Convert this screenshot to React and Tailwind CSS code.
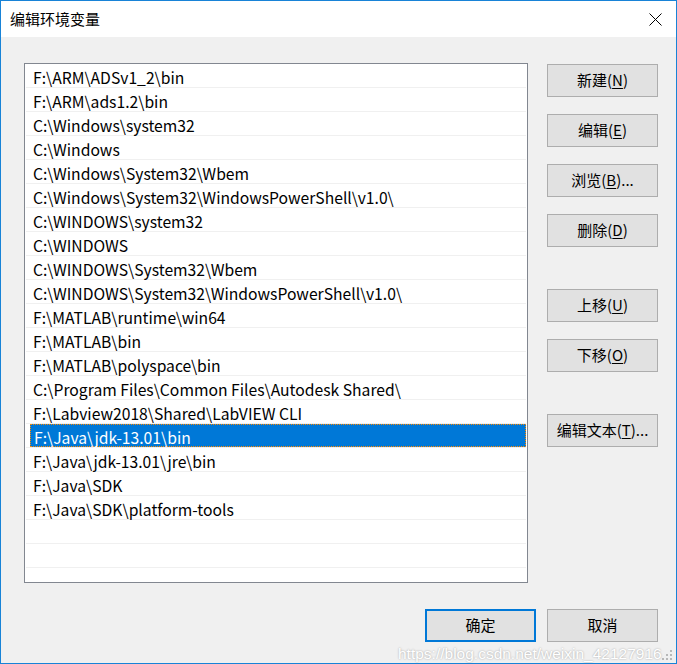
import React from "react";

const paths = [
  "F:\\ARM\\ADSv1_2\\bin",
  "F:\\ARM\\ads1.2\\bin",
  "C:\\Windows\\system32",
  "C:\\Windows",
  "C:\\Windows\\System32\\Wbem",
  "C:\\Windows\\System32\\WindowsPowerShell\\v1.0\\",
  "C:\\WINDOWS\\system32",
  "C:\\WINDOWS",
  "C:\\WINDOWS\\System32\\Wbem",
  "C:\\WINDOWS\\System32\\WindowsPowerShell\\v1.0\\",
  "F:\\MATLAB\\runtime\\win64",
  "F:\\MATLAB\\bin",
  "F:\\MATLAB\\polyspace\\bin",
  "C:\\Program Files\\Common Files\\Autodesk Shared\\",
  "F:\\Labview2018\\Shared\\LabVIEW CLI",
  "F:\\Java\\jdk-13.01\\bin",
  "F:\\Java\\jdk-13.01\\jre\\bin",
  "F:\\Java\\SDK",
  "F:\\Java\\SDK\\platform-tools",
  "",
  "",
  "",
];

const SELECTED = 15;

function Btn({ label, hot, tail = "", primary }) {
  return (
    <button
      className={
        "w-[111px] h-[33px] bg-[#e1e1e1] text-[15px] text-black flex items-center justify-center " +
        (primary ? "border-2 border-[#0078d7]" : "border border-[#adadad]")
      }
    >
      {label}
      {hot && (
        <>
          (<span className="underline underline-offset-2">{hot}</span>){tail}
        </>
      )}
    </button>
  );
}

export default function App() {
  return (
    <div className="relative w-[677px] h-[664px] border border-[#1883d7] bg-[#f0f0f0] flex flex-col overflow-hidden font-['Noto_Sans_CJK_SC',sans-serif]">
      <div className="h-[36px] bg-white flex items-center justify-between pl-[9px] pr-[14px]">
        <span className="text-[15px] text-black">编辑环境变量</span>
        <svg width="13" height="13" viewBox="0 0 13 13">
          <path d="M0.5 0.5 L12.5 12.5 M12.5 0.5 L0.5 12.5" stroke="#000" strokeWidth="1" />
        </svg>
      </div>

      <div className="flex pl-[23px] pt-[26px] gap-[19px]">
        <div className="w-[504px] h-[520px] bg-white border border-[#828790] overflow-hidden">
          {paths.map((p, i) => (
            <div key={i} className="h-[24px] mx-[1px] border-b border-[#f0f0f0] flex">
              <div
                className={
                  "ml-[4px] flex-1 pl-[3px] pt-[4px] flex items-center text-[15.7px] whitespace-nowrap " +
                  (i === SELECTED
                    ? "bg-[#0078d7] text-white border border-dotted border-[#ff8a00]"
                    : "text-black")
                }
              >
                {p}
              </div>
            </div>
          ))}
        </div>

        <div className="flex flex-col pt-[1px]">
          <div className="flex flex-col gap-[17px]">
            <Btn label="新建" hot="N" />
            <Btn label="编辑" hot="E" />
            <Btn label="浏览" hot="B" tail="..." />
            <Btn label="删除" hot="D" />
          </div>
          <div className="flex flex-col gap-[17px] mt-[42px]">
            <Btn label="上移" hot="U" />
            <Btn label="下移" hot="O" />
          </div>
          <div className="mt-[42px]">
            <Btn label="编辑文本" hot="T" tail="..." />
          </div>
        </div>
      </div>

      <div className="flex justify-end gap-[11px] pr-[18px] mt-[26px]">
        <Btn label="确定" primary />
        <Btn label="取消" />
      </div>

      <span className="absolute left-[397px] top-[641px] text-[15.5px] text-white font-['Liberation_Sans',sans-serif] [text-shadow:0_0_2px_rgba(0,0,0,0.35)] whitespace-nowrap">
        https://blog.csdn.net/weixin_42127916
      </span>

      <svg className="absolute right-[3px] bottom-[2px]" width="11" height="11" viewBox="0 0 11 11">
        <rect x="8" y="0" width="2" height="2" fill="#b8b8b8" />
        <rect x="4" y="4" width="2" height="2" fill="#b8b8b8" />
        <rect x="8" y="4" width="2" height="2" fill="#b8b8b8" />
        <rect x="0" y="8" width="2" height="2" fill="#b8b8b8" />
        <rect x="4" y="8" width="2" height="2" fill="#b8b8b8" />
        <rect x="8" y="8" width="2" height="2" fill="#b8b8b8" />
      </svg>
    </div>
  );
}
